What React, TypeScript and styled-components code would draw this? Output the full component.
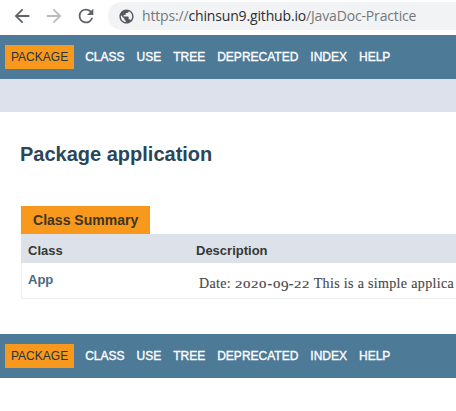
import React from "react";
import styled, { createGlobalStyle } from "styled-components";

const GlobalStyle = createGlobalStyle`
  * { box-sizing: border-box; }
  body { margin: 0; background: #fff; overflow: hidden; font-family: "Liberation Sans", Arial, sans-serif; }
`;

const Page = styled.div`
  width: 456px;
  height: 411px;
  overflow: hidden;
  background: #fff;
`;

const BrowserBar = styled.header`
  display: flex;
  align-items: flex-start;
  height: 35px;
  padding: 2px 0 0 11px;
`;

const ToolIcon = styled.svg<{ $color: string }>`
  flex: none;
  width: 22px;
  height: 22px;
  margin: 3px 10px 0 0;
  fill: ${(p) => p.$color};
`;

const AddressBar = styled.div`
  display: flex;
  align-items: center;
  flex: 1;
  height: 28px;
  margin-left: 1px;
  padding-left: 10px;
  border-radius: 14px 0 0 14px;
  background: #f1f3f4;
`;

const Globe = styled.svg`
  flex: none;
  width: 17px;
  height: 17px;
  margin-right: 7px;
  fill: #55595e;
`;

const Url = styled.span`
  font: 14px/20px "Open Sans", "Noto Sans", sans-serif;
  letter-spacing: -0.16px;
  color: #74787c;
  white-space: nowrap;
`;

const Host = styled.span`
  color: #2b2e32;
`;

const NavBar = styled.nav`
  display: flex;
  align-items: flex-start;
  height: 44px;
  padding: 10px 5px 0;
  background: #4d7a97;
`;

const NavItem = styled.a<{ $active?: boolean }>`
  height: 24px;
  margin-right: ${(p) => (p.$active ? 11 : 12)}px;
  padding: ${(p) => (p.$active ? "0 6px" : "0")};
  background: ${(p) => (p.$active ? "#f8981d" : "transparent")};
  color: ${(p) => (p.$active ? "#253441" : "#fff")};
  font-size: 12px;
  line-height: 24px;
  -webkit-text-stroke: ${(p) => (p.$active ? "0" : "0.35px #fff")};
`;

const SubNav = styled.div`
  height: 33px;
  background: #dde1eb;
`;

const Content = styled.main`
  height: 222px;
  padding: 30px 0 0 20px;
`;

const Title = styled.h1`
  margin: 0 0 40px;
  color: #2c4557;
  font-size: 20px;
  line-height: 24px;
`;

const Caption = styled.div`
  width: 129px;
  height: 28px;
  margin-left: 1px;
  padding-left: 12px;
  background: #f8981d;
  color: #3b3524;
  font-size: 14px;
  font-weight: bold;
  line-height: 28px;
  letter-spacing: 0.02px;
`;

const Row = styled.div<{ $head?: boolean }>`
  display: grid;
  grid-template-columns: 168px 1fr;
  height: ${(p) => (p.$head ? 29 : 36)}px;
  margin-left: 1px;
  padding-left: ${(p) => (p.$head ? 7 : 6)}px;
  background: ${(p) => (p.$head ? "#dde1e9" : "#fff")};
  border: solid #eee;
  border-width: ${(p) => (p.$head ? "0" : "0 0 1px 1px")};
  color: #353833;
  font-size: 13px;
  font-weight: bold;
  line-height: ${(p) => (p.$head ? 33 : 34)}px;
`;

const ClassLink = styled.a`
  color: #4a6782;
`;

const Description = styled.span`
  padding: 6px 0 0 3px;
  overflow: hidden;
  color: #474747;
  font: 14px/29px Georgia, "Liberation Serif", serif;
  letter-spacing: 0.34px;
  white-space: nowrap;
  -webkit-text-stroke: 0.15px #474747;
`;

const Figure = styled.span<{ $low?: boolean }>`
  display: inline-block;
  width: ${(p) => (p.$low ? 7.9 : 8.2)}px;
  font-size: ${(p) => (p.$low ? 14 : 11)}px;
  line-height: 14px;
  vertical-align: ${(p) => (p.$low ? -3 : 0)}px;
  transform: scaleX(${(p) => (p.$low ? 1.08 : 1.35)});
  transform-origin: left;
`;

const links = ["PACKAGE", "CLASS", "USE", "TREE", "DEPRECATED", "INDEX", "HELP"];

const Navigation = () => (
  <NavBar>
    {links.map((label) => (
      <NavItem key={label} $active={label === "PACKAGE"}>{label}</NavItem>
    ))}
  </NavBar>
);

// Sets digits in old-style form: 0 and 2 at x-height, 9 below the baseline.
const OldStyleDate = ({ value }: { value: string }) => (
  <>
    {value.split("").map((c, i) =>
      c === "-" ? <span key={i}>-</span> : <Figure key={i} $low={c === "9"}>{c}</Figure>
    )}
  </>
);

export default function App() {
  return (
    <Page>
      <GlobalStyle />
      <BrowserBar>
        <ToolIcon viewBox="0 0 24 24" $color="#5f6368">
          <path d="M20 11H7.83l5.59-5.59L12 4l-8 8 8 8 1.41-1.41L7.83 13H20v-2z" />
        </ToolIcon>
        <ToolIcon viewBox="0 0 24 24" $color="#babcbe">
          <path d="M12 4l-1.41 1.41L16.17 11H4v2h12.17l-5.58 5.59L12 20l8-8z" />
        </ToolIcon>
        <ToolIcon viewBox="0 0 24 24" $color="#5f6368">
          <path d="M17.65 6.35A7.96 7.96 0 0 0 12 4a8 8 0 1 0 7.73 10h-2.08A6 6 0 1 1 12 6c1.66 0 3.14.69 4.22 1.78L13 11h7V4l-2.35 2.35z" />
        </ToolIcon>
        <AddressBar>
          <Globe viewBox="0 0 24 24">
            <path d="M12 2C6.48 2 2 6.48 2 12s4.48 10 10 10 10-4.48 10-10S17.52 2 12 2zm-1 17.93c-3.95-.49-7-3.85-7-7.93 0-.62.08-1.21.21-1.79L9 15v1c0 1.1.9 2 2 2v1.93zm6.9-2.54c-.26-.81-1-1.39-1.9-1.39h-1v-3c0-.55-.45-1-1-1H8v-2h2c.55 0 1-.45 1-1V7h2c1.1 0 2-.9 2-2v-.41c2.93 1.19 5 4.06 5 7.41 0 2.08-.8 3.97-2.1 5.39z" />
          </Globe>
          <Url>https://<Host>chinsun9.github.io</Host>/JavaDoc-Practice</Url>
        </AddressBar>
      </BrowserBar>
      <Navigation />
      <SubNav />
      <Content>
        <Title>Package application</Title>
        <Caption>Class Summary</Caption>
        <Row $head>
          <span>Class</span>
          <span>Description</span>
        </Row>
        <Row>
          <ClassLink>App</ClassLink>
          <Description>Date: <OldStyleDate value="2020-09-22" /> This is a simple applica</Description>
        </Row>
      </Content>
      <Navigation />
    </Page>
  );
}
